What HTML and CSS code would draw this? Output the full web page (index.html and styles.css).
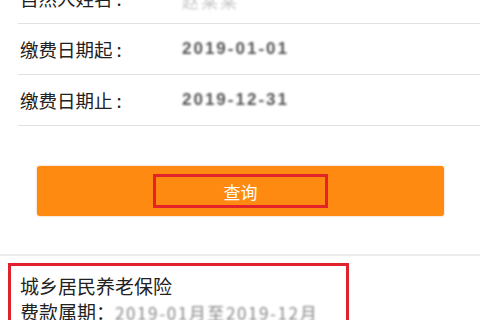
FILE: index.html
```html
<!DOCTYPE html>
<html lang="zh-CN">
<head>
    <meta charset="UTF-8">
    <meta name="viewport" content="width=device-width, initial-scale=1.0">
    <title>缴费查询</title>
    <link rel="stylesheet" href="styles.css">
</head>
<body>
    <div class="form">
        <div class="row">
            <span class="label">自然人姓名<span class="colon">:</span></span>
            <span class="value faint">赵某某</span>
        </div>
        <div class="row">
            <span class="label">缴费日期起<span class="colon">:</span></span>
            <span class="value">2019-01-01</span>
        </div>
        <div class="row">
            <span class="label">缴费日期止<span class="colon">:</span></span>
            <span class="value">2019-12-31</span>
        </div>
    </div>

    <div class="actions">
        <button class="query-btn"><span class="mark">查询</span></button>
    </div>

    <div class="result">
        <div class="result-box">
            <div class="result-title">城乡居民养老保险</div>
            <div class="result-line">费款属期：<span class="period">2019-01月至2019-12月</span></div>
        </div>
    </div>
</body>
</html>
```

FILE: styles.css
```css
body {
    margin: 0;
    background-color: #fff;
    font-family: "Noto Sans CJK SC", "Liberation Sans", sans-serif;
    color: #222;
    overflow: hidden;
}
.form {
    margin-top: -27px;
    padding-left: 18px;
}
.row {
    height: 50px;
    display: flex;
    align-items: center;
    border-bottom: 1px solid #e2e2e2;
}
.label {
    width: 162px;
    padding-left: 2px;
    font-size: 18.5px;
    color: #222;
}
.colon {
    margin-left: 4px;
}
.value {
    font-family: "Liberation Sans", sans-serif;
    font-weight: bold;
    font-size: 17px;
    letter-spacing: 2px;
    color: #555;
    filter: blur(0.8px);
}
.value.faint {
    font-family: "Noto Sans CJK SC", sans-serif;
    font-weight: normal;
    color: #c8c8c8;
    letter-spacing: 2px;
    margin-top: 4px;
}
.actions {
    padding: 40px 36px 38px 37px;
    border-bottom: 2px solid #ececec;
}
.query-btn {
    width: 407px;
    height: 50px;
    display: flex;
    align-items: center;
    justify-content: center;
    background-color: #ff8a12;
    border: none;
    border-radius: 3px;
    padding: 0;
    box-shadow: 0 0 2px rgba(200, 110, 20, 0.5);
}
.mark {
    width: 169px;
    height: 28px;
    border: 3px solid #e3222a;
    display: flex;
    align-items: center;
    justify-content: center;
    color: #fff;
    font-family: "Noto Sans CJK SC", sans-serif;
    font-size: 17px;
}
.result {
    padding: 7px 0 0 8px;
}
.result-box {
    width: 326px;
    height: 60px;
    border: 3px solid #e0222c;
    border-bottom: none;
    padding: 7px 0 0 9px;
}
.result-title,
.result-line {
    font-size: 19px;
    line-height: 26px;
    color: #222;
}
.period {
    font-size: 17px;
    color: #888;
    letter-spacing: 1.6px;
    filter: blur(1px);
    display: inline-block;
}
```
